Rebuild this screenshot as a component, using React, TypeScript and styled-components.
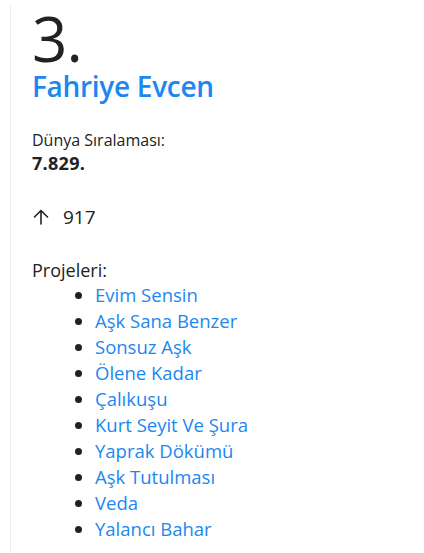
import React from "react";
import styled, { createGlobalStyle } from "styled-components";

const Global = createGlobalStyle`
  html, body { margin: 0; padding: 0; background: #fff; }
  body { font-family: "Open Sans", "Noto Sans", sans-serif; color: #222; }
`;

const Page = styled.div`
  padding-left: 10px;
  height: 553px;
  overflow: hidden;
`;

const Card = styled.div`
  border-left: 1px solid #ececec;
  padding: 0 0 0 21px;
  min-height: 553px;
`;

const Rank = styled.div`
  font-size: 62px;
  line-height: 66px;
  font-weight: 400;
  color: #222;
  margin-top: 5px;
  letter-spacing: -1px;
`;

const Name = styled.h2`
  margin: 0;
  font-size: 28px;
  font-weight: 600;
  color: #1a88f0;
  letter-spacing: -0.3px;
  line-height: 30px;
`;

const Label = styled.div`
  margin-top: 30px;
  font-size: 16px;
  line-height: 18px;
`;

const Value = styled.div`
  margin-top: 3px;
  font-size: 18px;
  font-weight: 700;
  line-height: 22px;
  letter-spacing: 0.3px;
`;

const Trend = styled.div`
  margin-top: 31px;
  display: flex;
  align-items: center;
  gap: 13px;
  font-size: 19px;
  line-height: 24px;
`;

const Heading = styled.div`
  margin-top: 29px;
  font-size: 18px;
  line-height: 24px;
`;

const List = styled.ul`
  margin: 0;
  padding-left: 63px;
  font-size: 18.5px;
  line-height: 26px;
  li::marker { color: #222; }
`;

const Link = styled.a`
  color: #1a88f0;
  text-decoration: none;
`;

const projects = [
  "Evim Sensin",
  "Aşk Sana Benzer",
  "Sonsuz Aşk",
  "Ölene Kadar",
  "Çalıkuşu",
  "Kurt Seyit Ve Şura",
  "Yaprak Dökümü",
  "Aşk Tutulması",
  "Veda",
  "Yalancı Bahar",
];

export default function App() {
  return (
    <>
      <Global />
      <Page>
        <Card>
          <Rank>3.</Rank>
          <Name>Fahriye Evcen</Name>
          <Label>Dünya Sıralaması:</Label>
          <Value>7.829.</Value>
          <Trend>
            <svg width="18" height="18" viewBox="0 0 18 18" fill="none" stroke="#222" strokeWidth="1.6" strokeLinecap="round" strokeLinejoin="round">
              <path d="M9 16V2.5M2.5 9L9 2.5L15.5 9" />
            </svg>
            <span>917</span>
          </Trend>
          <Heading>Projeleri:</Heading>
          <List>
            {projects.map((p) => (
              <li key={p}>
                <Link href="#">{p}</Link>
              </li>
            ))}
          </List>
        </Card>
      </Page>
    </>
  );
}
